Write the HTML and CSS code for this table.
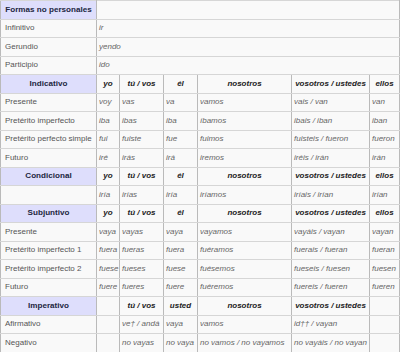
FILE: index.html
```html
<!DOCTYPE html>
<html lang="es">
<head>
<meta charset="utf-8">
<title>Conjugación de ir</title>
<link rel="stylesheet" href="styles.css">
</head>
<body>
<table class="conj">
  <colgroup>
    <col class="c-label">
    <col class="c-yo">
    <col class="c-tu">
    <col class="c-el">
    <col class="c-nos">
    <col class="c-vos">
    <col class="c-ellos">
  </colgroup>
  <tbody>
    <tr><th class="sec">Formas no personales</th><td colspan="6"></td></tr>
    <tr><td class="lbl">Infinitivo</td><td class="f" colspan="6">ir</td></tr>
    <tr><td class="lbl">Gerundio</td><td class="f" colspan="6">yendo</td></tr>
    <tr><td class="lbl">Participio</td><td class="f" colspan="6">ido</td></tr>

    <tr><th class="sec">Indicativo</th><th class="p">yo</th><th class="p">tú / vos</th><th class="p">él</th><th class="p">nosotros</th><th class="p">vosotros / ustedes</th><th class="p">ellos</th></tr>
    <tr><td class="lbl">Presente</td><td class="f">voy</td><td class="f">vas</td><td class="f">va</td><td class="f">vamos</td><td class="f">vais / van</td><td class="f">van</td></tr>
    <tr><td class="lbl">Pretérito imperfecto</td><td class="f">iba</td><td class="f">ibas</td><td class="f">iba</td><td class="f">íbamos</td><td class="f">ibais / iban</td><td class="f">iban</td></tr>
    <tr><td class="lbl">Pretérito perfecto simple</td><td class="f">fui</td><td class="f">fuiste</td><td class="f">fue</td><td class="f">fuimos</td><td class="f">fuisteis / fueron</td><td class="f">fueron</td></tr>
    <tr><td class="lbl">Futuro</td><td class="f">iré</td><td class="f">irás</td><td class="f">irá</td><td class="f">iremos</td><td class="f">iréis / irán</td><td class="f">irán</td></tr>

    <tr><th class="sec">Condicional</th><th class="p">yo</th><th class="p">tú / vos</th><th class="p">él</th><th class="p">nosotros</th><th class="p">vosotros / ustedes</th><th class="p">ellos</th></tr>
    <tr><td class="lbl"></td><td class="f">iría</td><td class="f">irías</td><td class="f">iría</td><td class="f">iríamos</td><td class="f">iríais / irían</td><td class="f">irían</td></tr>

    <tr><th class="sec">Subjuntivo</th><th class="p">yo</th><th class="p">tú / vos</th><th class="p">él</th><th class="p">nosotros</th><th class="p">vosotros / ustedes</th><th class="p">ellos</th></tr>
    <tr><td class="lbl">Presente</td><td class="f">vaya</td><td class="f">vayas</td><td class="f">vaya</td><td class="f">vayamos</td><td class="f">vayáis / vayan</td><td class="f">vayan</td></tr>
    <tr><td class="lbl">Pretérito imperfecto 1</td><td class="f">fuera</td><td class="f">fueras</td><td class="f">fuera</td><td class="f">fuéramos</td><td class="f">fuerais / fueran</td><td class="f">fueran</td></tr>
    <tr><td class="lbl">Pretérito imperfecto 2</td><td class="f">fuese</td><td class="f">fueses</td><td class="f">fuese</td><td class="f">fuésemos</td><td class="f">fueseis / fuesen</td><td class="f">fuesen</td></tr>
    <tr><td class="lbl">Futuro</td><td class="f">fuere</td><td class="f">fueres</td><td class="f">fuere</td><td class="f">fuéremos</td><td class="f">fuereis / fueren</td><td class="f">fueren</td></tr>

    <tr><th class="sec">Imperativo</th><th class="p"></th><th class="p">tú / vos</th><th class="p">usted</th><th class="p">nosotros</th><th class="p">vosotros / ustedes</th><th class="p"></th></tr>
    <tr><td class="lbl">Afirmativo</td><td class="f"></td><td class="f">ve† / andá</td><td class="f">vaya</td><td class="f">vamos</td><td class="f">id†† / vayan</td><td class="f"></td></tr>
    <tr><td class="lbl">Negativo</td><td class="f"></td><td class="f">no vayas</td><td class="f">no vaya</td><td class="f">no vamos / no vayamos</td><td class="f">no vayáis / no vayan</td><td class="f"></td></tr>
  </tbody>
</table>
</body>
</html>
```

FILE: styles.css
```css
html, body {
  margin: 0;
  padding: 0;
  background: #ffffff;
}

.conj {
  border-collapse: collapse;
  table-layout: fixed;
  width: 399px;
  font-family: "Liberation Sans", Arial, sans-serif;
  font-size: 8px;
  line-height: 10px;
  background: #f9f9f9;
  border: 1px solid #b5b5b5;
}

.c-label { width: 96px; }
.c-yo { width: 23px; }
.c-tu { width: 44px; }
.c-el { width: 34px; }
.c-nos { width: 94px; }
.c-vos { width: 78px; }
.c-ellos { width: 30px; }

.conj tr {
  height: 18.5px;
}

.conj td,
.conj th {
  border-top: 1px solid #d6d6d6;
  border-bottom: 1px solid #d6d6d6;
  border-left: 1px solid #bababa;
  border-right: 1px solid #bababa;
  padding: 0 0 0 2px;
  white-space: nowrap;
  overflow: hidden;
  vertical-align: middle;
}

.conj td.lbl {
  color: #555;
  text-align: left;
  padding-left: 4px;
}

.conj td.f {
  color: #666;
  font-style: italic;
  text-align: left;
}

.conj th.sec {
  background: #dedefc;
  color: #22263f;
  font-weight: bold;
  font-size: 8.1px;
  text-align: center;
  padding: 0 1px;
}

.conj th.p {
  color: #222;
  font-weight: bold;
  font-style: italic;
  text-align: center;
  padding: 0 1px;
}
```
